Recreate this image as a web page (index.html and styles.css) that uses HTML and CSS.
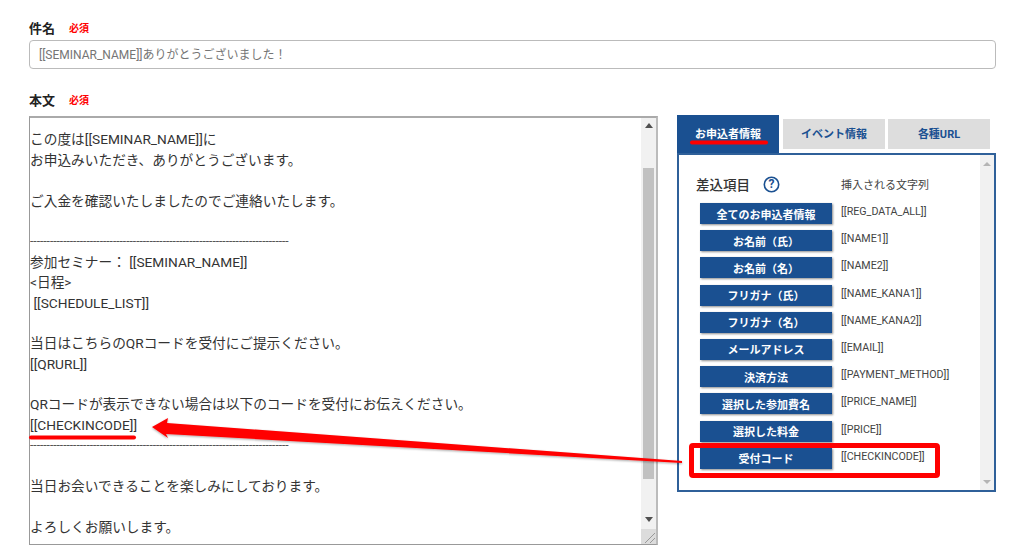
FILE: index.html
```html
<!DOCTYPE html>
<html lang="ja">
<head>
<meta charset="utf-8">
<title>メール本文</title>
<link rel="stylesheet" href="styles.css">
</head>
<body>
<main class="page">
  <div class="label-row"><span class="label">件名</span><span class="required">必須</span></div>
  <div class="subject">[[SEMINAR_NAME]]ありがとうございました！</div>
  <div class="label-row body-label"><span class="label">本文</span><span class="required">必須</span></div>
  <div class="columns">
    <div class="editor">
      <div class="editor-text">
        <div class="line">この度は[[SEMINAR_NAME]]に</div>
        <div class="line">お申込みいただき、ありがとうございます。</div>
        <div class="line">&nbsp;</div>
        <div class="line">ご入金を確認いたしましたのでご連絡いたします。</div>
        <div class="line">&nbsp;</div>
        <div class="line dash">------------------------------------------------------------------------------</div>
        <div class="line">参加セミナー： [[SEMINAR_NAME]]</div>
        <div class="line">&lt;日程&gt;</div>
        <div class="line">&nbsp;[[SCHEDULE_LIST]]</div>
        <div class="line">&nbsp;</div>
        <div class="line">当日はこちらのQRコードを受付にご提示ください。</div>
        <div class="line">[[QRURL]]</div>
        <div class="line">&nbsp;</div>
        <div class="line">QRコードが表示できない場合は以下のコードを受付にお伝えください。</div>
        <div class="line">[[CHECKINCODE]]</div>
        <div class="line dash">------------------------------------------------------------------------------</div>
        <div class="line">&nbsp;</div>
        <div class="line">当日お会いできることを楽しみにしております。</div>
        <div class="line">&nbsp;</div>
        <div class="line">よろしくお願いします。</div>
      </div>
      <div class="scrollbar">
        <div class="arrow-box"><span class="arrow-up"></span></div>
        <div class="track"><div class="thumb"></div></div>
        <div class="arrow-box"><span class="arrow-down"></span></div>
        <div class="corner">
          <svg width="15" height="15" viewBox="0 0 15 15"><path d="M4 14 14 4M9 14 14 9" stroke="#999" stroke-width="1" fill="none"/></svg>
        </div>
      </div>
    </div>
    <aside class="side">
      <div class="tabs">
        <div class="tab active">お申込者情報</div>
        <div class="tab">イベント情報</div>
        <div class="tab">各種URL</div>
      </div>
      <div class="panel">
        <div class="panel-body">
          <div class="panel-head">
            <span class="panel-title">差込項目</span>
            <svg class="help" width="17" height="17" viewBox="0 0 17 17"><circle cx="8.5" cy="8.5" r="7.2" fill="none" stroke="#1a5091" stroke-width="1.6"/><text x="8.5" y="12.4" text-anchor="middle" class="help-q">?</text></svg>
            <span class="panel-sub">挿入される文字列</span>
          </div>
          <div class="row"><div class="btn">全てのお申込者情報</div><div class="val">[[REG_DATA_ALL]]</div></div>
          <div class="row"><div class="btn">お名前（氏）</div><div class="val">[[NAME1]]</div></div>
          <div class="row"><div class="btn">お名前（名）</div><div class="val">[[NAME2]]</div></div>
          <div class="row"><div class="btn">フリガナ（氏）</div><div class="val">[[NAME_KANA1]]</div></div>
          <div class="row"><div class="btn">フリガナ（名）</div><div class="val">[[NAME_KANA2]]</div></div>
          <div class="row"><div class="btn">メールアドレス</div><div class="val">[[EMAIL]]</div></div>
          <div class="row"><div class="btn">決済方法</div><div class="val">[[PAYMENT_METHOD]]</div></div>
          <div class="row"><div class="btn">選択した参加費名</div><div class="val">[[PRICE_NAME]]</div></div>
          <div class="row"><div class="btn">選択した料金</div><div class="val">[[PRICE]]</div></div>
          <div class="row"><div class="btn">受付コード</div><div class="val">[[CHECKINCODE]]</div></div>
        </div>
        <div class="panel-scroll">
          <span class="mini-up"></span>
          <span class="mini-down"></span>
        </div>
      </div>
    </aside>
  </div>
</main>
<svg class="notes" width="1024" height="549" viewBox="0 0 1024 549">
  <defs><filter id="soft" x="-5%" y="-30%" width="110%" height="160%"><feDropShadow dx="0" dy="1" stdDeviation="1.2" flood-color="#000" flood-opacity=".35"/></filter></defs>
  <polygon points="152,427 168,418 167,423 682,461 682,463 166,434 168,438" fill="#f00" filter="url(#soft)"/>
  <rect x="691.5" y="445.5" width="246" height="30" rx="1.5" fill="none" stroke="#f00" stroke-width="5"/>
  <line x1="31" y1="437.5" x2="134" y2="437.5" stroke="#f00" stroke-width="4" stroke-linecap="round"/>
  <line x1="692" y1="142.500" x2="766" y2="142.500" stroke="#f00" stroke-width="4" stroke-linecap="round"/>
</svg>
</body>
</html>
```
FILE: styles.css
```css
* { box-sizing: border-box; }
html, body { margin: 0; height: 549px; overflow: hidden; background: #fff; }
body { font-family: Roboto, "Noto Sans CJK JP", sans-serif; color: #333; position: relative; }
.page { padding: 18px 28px 0 29px; }
.label-row { display: flex; align-items: center; height: 18px; }
.label { font-size: 13px; font-weight: 700; color: #222; }
.required { font-size: 10px; font-weight: 700; color: #f00; margin-left: 14px; }
.subject { margin-top: 4px; height: 29px; border: 1px solid #bbb; border-radius: 4px; padding: 0 9px; font-size: 12px; line-height: 28px; color: #757575; }
.body-label { margin-top: 21px; }
.columns { display: flex; align-items: flex-start; margin-top: 8px; gap: 19px; }
.editor { width: 629px; height: 429px; display: flex; border: 1px solid #999; border-top: 2px solid #aaa; border-right: 2px solid #bbb; }
.editor-text { flex: 1; padding-top: 11.4px; font-size: 13.7px; line-height: 20.4px; color: #333; overflow: hidden; white-space: nowrap; }
.line { height: 20.4px; }
.dash { font-size: 12px; color: #555; }
.scrollbar { width: 15px; display: flex; flex-direction: column; background: #f1f1f1; }
.arrow-box { height: 15px; display: flex; align-items: center; justify-content: center; }
.track { flex: 1; padding: 35px 2px 35px 2px; }
.thumb { height: 100%; background: #c1c1c1; }
.arrow-box:nth-child(3) { margin-top: -2px; margin-bottom: 2px; }
.arrow-up { border: 4px solid transparent; border-top: 0; border-bottom: 5px solid #505050; }
.arrow-down { border: 4px solid transparent; border-bottom: 0; border-top: 5px solid #505050; }
.corner { height: 15px; background: #dcdcdc; }
.corner svg { display: block; }
.side { width: 319px; margin-top: -1px; }
.tabs { display: flex; align-items: center; gap: 3px; height: 38px; }
.tab { width: 102px; height: 30px; background: #ddd; color: #1a5091; font-size: 11px; font-weight: 700; display: flex; align-items: center; justify-content: center; padding-bottom: 2px; }
.tab.active { height: 38px; background: #1a5091; color: #fff; margin-right: 1px; padding-bottom: 3px; }
.panel { height: 339px; border: 2px solid #2f6099; display: flex; }
.panel-body { flex: 1; padding: 12px 0 0 21px; }
.panel-head { display: flex; align-items: center; height: 34px; margin: 0 0 2px -4px; }
.panel-title { font-size: 13.5px; font-weight: 500; color: #333; }
.help { margin-left: 13px; }
.help-q { font: 700 12px Roboto, sans-serif; fill: #1a5091; }
.panel-sub { font-size: 11px; color: #444; margin-left: 61px; }
.row { display: flex; height: 27.2px; gap: 9px; }
.btn { width: 132px; height: 21px; background: #1a5091; color: #fff; font-size: 11px; font-weight: 700; display: flex; align-items: center; justify-content: center; box-shadow: 1px 1px 2px rgba(0,0,0,.45); }
.val { font-size: 10.7px; line-height: 18px; color: #444; }
.panel-scroll { width: 14px; background: #f1f1f1; display: flex; flex-direction: column; justify-content: space-between; align-items: center; padding: 7px 0 6px; }
.mini-up { border: 4px solid transparent; border-top: 0; border-bottom: 4px solid #b5b5b5; }
.mini-down { border: 4px solid transparent; border-bottom: 0; border-top: 4px solid #b5b5b5; }
.notes { position: absolute; left: 0; top: 0; pointer-events: none; }
```
